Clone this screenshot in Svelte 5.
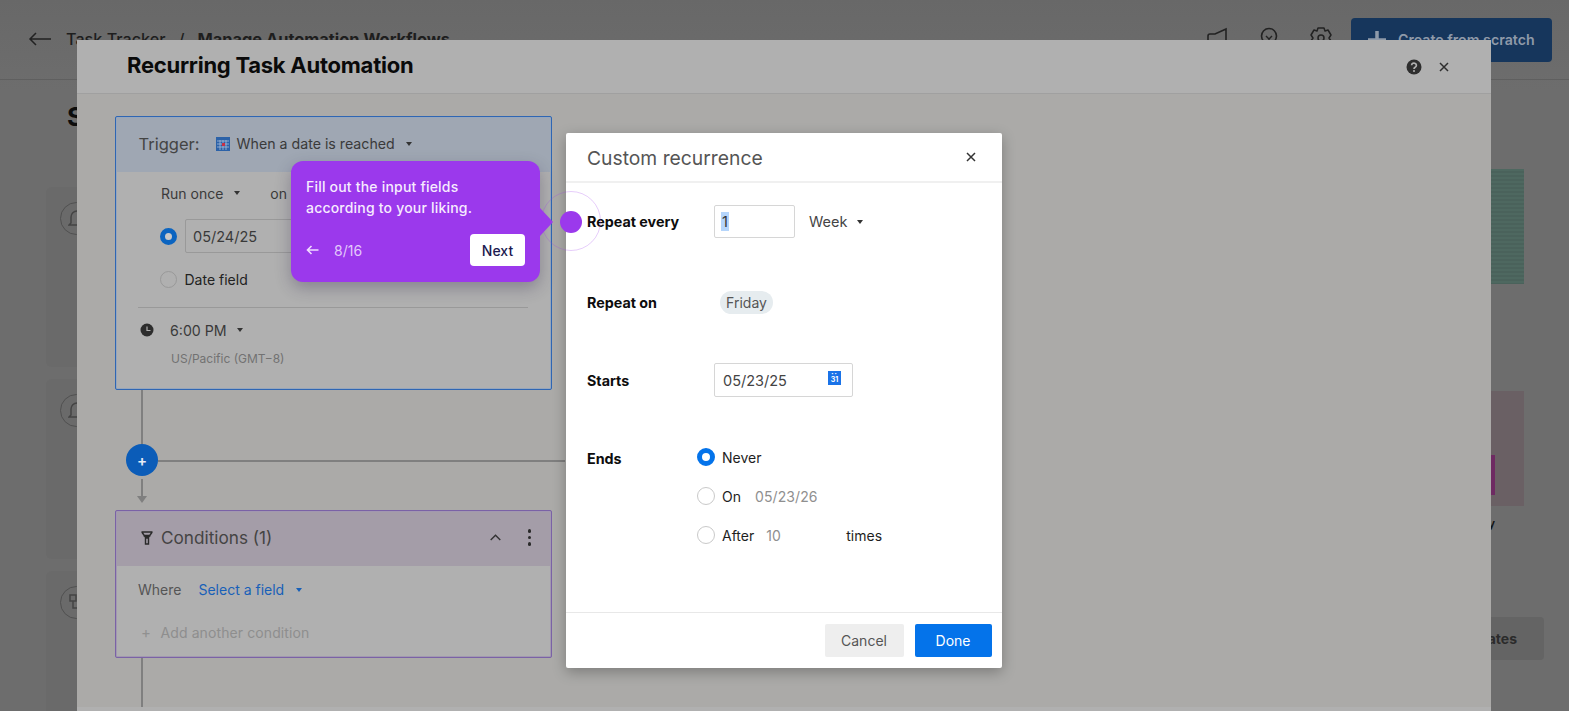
<script>
  const endOptions = [
    { label: 'Never', checked: true },
    { label: 'On', value: '05/23/26' },
    { label: 'After', value: '10', suffix: 'times' }
  ];
</script>

<div class="page">
  <header class="topbar">
    <svg class="back" width="24" height="14" viewBox="0 0 24 14"><path d="M23 7H2M8 1 2 7l6 6" fill="none" stroke="#222" stroke-width="1.5"/></svg>
    <span class="crumb">Task Tracker</span>
    <span class="crumb slash">/</span>
    <b class="crumb">Manage Automation Workflows</b>
    <span class="grow"></span>
    <svg class="topicon" width="24" height="24" viewBox="0 0 24 24"><path d="M3 20V9q0-2 2-2h5L21 2v18z" fill="none" stroke="#222" stroke-width="1.6"/></svg>
    <svg class="topicon" width="24" height="24" viewBox="0 0 24 24"><circle cx="12" cy="9" r="7.500" fill="none" stroke="#222" stroke-width="1.6"/><path d="m9 9 3 3 3-3M12 12v8" fill="none" stroke="#222" stroke-width="1.4"/></svg>
    <svg class="topicon gear" width="24" height="24" viewBox="0 0 24 24"><path d="m9 1h6l1 3 3-1 3 5-2 3 2 3-3 5-3-1-1 3H9l-1-3-3 1-3-5 2-3-2-3 3-5 3 1z" fill="none" stroke="#222" stroke-width="1.5" stroke-linejoin="round"/><circle cx="12" cy="11" r="3" fill="none" stroke="#222" stroke-width="1.5"/></svg>
    <button class="create">
      <svg width="18" height="18" viewBox="0 0 18 18"><path d="M9 0v18M0 9h18" stroke="#8f9aa9" stroke-width="3.500"/></svg>
      <span>Create from scratch</span>
    </button>
  </header>
  <main class="under">
    <div class="under-left">
      <h2>S</h2>
      <div class="ghost-card"><span class="ghost-circle"><svg width="18" height="20" viewBox="0 0 18 20"><path d="M3 14V8a6 6 0 0 1 12 0v6l2 2H1z" fill="none" stroke="#444" stroke-width="1.5"/></svg></span></div>
      <div class="ghost-card"><span class="ghost-circle"><svg width="18" height="20" viewBox="0 0 18 20"><path d="M3 14V8a6 6 0 0 1 12 0v6l2 2H1z" fill="none" stroke="#444" stroke-width="1.5"/></svg></span></div>
      <div class="ghost-card"><span class="ghost-circle"><svg width="18" height="20" viewBox="0 0 18 20"><path d="M2 2h6v6H2zM10 12h6v6h-6zM5 8v7h5" fill="none" stroke="#444" stroke-width="1.5"/></svg></span></div>
    </div>
    <div class="under-right">
      <div class="thumb green"></div>
      <div class="thumb pink"><span class="magenta"></span></div>
      <div class="thumb-label">Weekly</div>
      <button class="templates">Templates</button>
    </div>
  </main>
</div>

<section class="modal">
  <div class="modal-head">
    <h1>Recurring Task Automation</h1>
    <svg class="help" width="16" height="16" viewBox="0 0 16 16"><circle cx="8" cy="8" r="7.500" fill="#2e2e2e"/><path d="M5.600 6.200a2.400 2.200 0 1 1 3.600 2c-.8.500-1.200.8-1.200 1.700" fill="none" stroke="#b0b0b0" stroke-width="1.700"/><circle cx="8" cy="12" r="1" fill="#b0b0b0"/></svg>
    <svg class="modal-x" width="10" height="10" viewBox="0 0 10 10"><path d="m1 1 8 8M9 1 1 9" stroke="#2e2e2e" stroke-width="1.5"/></svg>
  </div>
  <div class="modal-body">
    <article class="card trigger">
      <div class="trigger-head">
        <span class="trigger-word">Trigger:</span>
        <svg class="tricon" width="14" height="14" viewBox="0 0 14 14"><rect width="14" height="14" fill="#2c62a8"/><path d="M1 4h12M1 7h12M1 10h12M4 3v10M7 3v10M10 3v10" stroke="#a9bcd8" stroke-width=".8"/><rect x="6" y="6" width="3" height="3" fill="#c83045"/></svg>
        <span class="trigger-val">When a date is reached</span>
        <i class="caret"></i>
      </div>
      <div class="trigger-body">
        <div class="run-row"><span>Run once</span><i class="caret"></i><span class="on">on</span></div>
        <div class="radio-row first">
          <span class="radio on-dark"></span>
          <span class="date-box">05/24/25</span>
        </div>
        <div class="radio-row">
          <span class="radio"></span>
          <span class="date-field">Date field</span>
        </div>
        <hr />
        <div class="time-row">
          <svg width="14" height="14" viewBox="0 0 14 14"><circle cx="7" cy="7" r="6.500" fill="#2d2d2d"/><path d="M7 3.500V7.500H10.500" fill="none" stroke="#b0b0b0" stroke-width="1.200"/></svg>
          <span>6:00 PM</span>
          <i class="caret"></i>
        </div>
        <div class="tz">US/Pacific (GMT−8)</div>
      </div>
    </article>

    <div class="connector">
      <span class="vline one"></span>
      <span class="add">+</span>
      <span class="hline"></span>
      <span class="vline two"></span>
      <span class="arrow"></span>
    </div>

    <article class="card conditions">
      <div class="cond-head">
        <svg width="12" height="14" viewBox="0 0 12 14"><path d="M.5 1h11M2 4.500h8M4.500 6h3v7h-3z M.8 1 5 7h2l4.200-6" fill="none" stroke="#2a2a2a" stroke-width="1.400"/></svg>
        <span class="cond-title">Conditions (1)</span>
        <span class="grow"></span>
        <svg width="11" height="7" viewBox="0 0 11 7"><path d="m.7 6 4.800-4.800L10.300 6" fill="none" stroke="#333" stroke-width="1.400"/></svg>
        <span class="dots"><i></i><i></i><i></i></span>
      </div>
      <div class="cond-body">
        <div class="where"><span>Where</span><span class="field">Select a field</span><i class="caret blue"></i></div>
        <div class="another"><span class="aplus">+</span>Add another condition</div>
      </div>
    </article>
    <span class="vline three"></span>
  </div>
  <div class="modal-foot"></div>
</section>

<section class="dialog">
  <div class="dlg-head">
    <span class="dlg-title">Custom recurrence</span>
    <svg width="10" height="10" viewBox="0 0 10 10"><path d="m1 1 8 8M9 1 1 9" stroke="#333" stroke-width="1.5"/></svg>
  </div>
  <div class="dlg-body">
    <div class="row every">
      <span class="lbl">Repeat every</span>
      <span class="num"><span class="sel">1</span></span>
      <span class="week">Week</span>
      <i class="caret"></i>
    </div>
    <div class="row on-day">
      <span class="lbl">Repeat on</span>
      <span class="chip">Friday</span>
    </div>
    <div class="row starts">
      <span class="lbl">Starts</span>
      <span class="start-box">
        <span>05/23/25</span>
        <span class="cal"><span class="cal-dots">▪▪</span><span class="cal-num">31</span></span>
      </span>
    </div>
    <div class="row ends">
      <span class="lbl">Ends</span>
      <div class="opts">
        {#each endOptions as o}
          <div class="opt">
            <span class="radio" class:blue-on={o.checked}></span>
            <span class="opt-label">{o.label}</span>
            {#if o.value}<span class="opt-val" class:short={o.suffix}>{o.value}</span>{/if}
            {#if o.suffix}<span class="opt-label">{o.suffix}</span>{/if}
          </div>
        {/each}
      </div>
    </div>
  </div>
  <div class="dlg-foot">
    <button class="cancel">Cancel</button>
    <button class="done">Done</button>
  </div>
</section>

<aside class="tip">
  <p>Fill out the input fields<br />according to your liking.</p>
  <div class="tip-foot">
    <svg width="13" height="10" viewBox="0 0 13 10"><path d="M12.500 5H1.500M5.500 1 1.500 5l4 4" fill="none" stroke="#f0dcff" stroke-width="1.600"/></svg>
    <span class="count">8/16</span>
    <span class="grow"></span>
    <button class="next">Next</button>
  </div>
  <span class="beak"></span>
</aside>
<span class="ring"></span>
<span class="dot"></span>

<style>
  :global(body) {
    margin: 0;
    background: #6c6c6c;
    font-family: Inter, "Liberation Sans", sans-serif;
    overflow: hidden;
  }
  .grow { flex: 1; }
  button { font-family: inherit; border: 0; }
  i { display: block; }

  .page { height: 711px; overflow: hidden; background: linear-gradient(#686868, #6d6d6d 90px); }
  .topbar {
    height: 80px;
    box-sizing: border-box;
    border-bottom: 1px solid #5f5f5f;
    display: flex;
    align-items: center;
    padding: 0 17px 0 28px;
  }
  .back { margin: 0 14px 2px 0; }
  .crumb { font-size: 16.2px; color: #1e1e1e; font-weight: 500; margin-bottom: 2px; }
  .slash { margin: 0 13px 2px; }
  b.crumb { font-weight: 700; font-size: 16.4px; }
  .topicon { margin-right: 28px; position: relative; top: -1px; }
  .topicon.gear { margin-right: 18px; }
  .create {
    width: 201px; height: 44px; background: #16365c; border-radius: 4px; white-space: nowrap;
    color: #8f9aa9; font-size: 14.2px; font-weight: 600;
    display: flex; align-items: center; gap: 12px; padding: 0 0 0 17px; box-sizing: border-box;
  }

  .under { display: flex; justify-content: space-between; padding: 0 25px 0 46px; }
  .under-left { width: 300px; }
  .under-left h2 { margin: 22px 0 0 21px; font-size: 26px; line-height: 30px; color: #0d0d0d; height: 85px; }
  .ghost-card { height: 180px; margin-bottom: 12px; background: #6a6a6a; padding: 15px 14px; box-sizing: border-box; border-radius: 6px; }
  .ghost-circle { width: 33px; height: 33px; box-sizing: border-box; border: 1.5px solid #505050; border-radius: 50%; display: flex; align-items: center; justify-content: center; }
  .under-right { display: flex; flex-direction: column; align-items: flex-end; padding-right: 20px; }
  .thumb { width: 120px; height: 115px; position: relative; }
  .green { margin-top: 89px; background: repeating-linear-gradient(#4e6860 0 2px, #4a625b 2px 4px); }
  .pink { margin-top: 107px; background: #6a6064; }
  .magenta { position: absolute; left: 0; width: 91px; top: 64px; height: 40px; background: #6e2a62; }
  .thumb-label { margin-top: 10px; font-size: 12px; font-weight: 600; color: #111; margin-right: 29px; }
  .templates {
    margin: 86px -20px 0 0; width: 120px; height: 43px; background: #646464; border-radius: 4px;
    font-size: 14px; font-weight: 700; color: #2b2b2b; text-align: right; padding-right: 27px;
  }

  .modal {
    position: absolute; left: 77px; top: 40px; width: 1414px; height: 671px;
    display: flex; flex-direction: column; background: #b0b0b0;
  }
  .modal-head {
    height: 54px; flex: none; box-sizing: border-box; border-bottom: 1px solid #a0a0a0; display: flex; align-items: center;
    padding: 0 42px 0 50px;
  }
  h1 { margin: 0 0 3px; flex: 1; font-size: 22px; font-weight: 700; letter-spacing: -.25px; color: #0a0a0a; }
  .modal-x { margin: 0 0 0 17px; }
  .modal-body { flex: 1; background: #abaaa8; padding: 22px 0 0 38px; display: flex; flex-direction: column; min-height: 0; }
  .modal-foot { height: 4px; flex: none; background: #b0b0b0; }

  .card { width: 437px; box-sizing: border-box; border-radius: 2px; overflow: hidden; background: #b0b0b0; flex: none; }
  .trigger { border: 2px solid #96a6bc; outline: 1px solid #2f66b3; outline-offset: -1px; height: 274px; }
  .trigger-head { height: 54px; box-sizing: border-box; padding: 0 0 2px 21.500px; background: #9fa7b3; display: flex; align-items: center; }
  .trigger-word { font-size: 16.5px; color: #444; margin-right: 16px; }
  .tricon { margin-right: 7px; }
  .trigger-val { font-size: 14.2px; color: #3a3a3a; margin: 0 11px 2px 0; }
  .caret { width: 0; height: 0; border: 3.5px solid transparent; border-top: 4px solid #333; border-bottom: 0; }
  .caret.blue { border-top-color: #1860b8; }
  .trigger-body { padding: 0 22px 0 21px; color: #3a3a3a; font-size: 14px; }
  .run-row { display: flex; align-items: center; height: 42px; padding-left: 23px; }
  .run-row .caret { margin-left: 11px; }
  .on { margin-left: 30px; }
  .radio-row { display: flex; align-items: center; gap: 8px; padding-left: 21.500px; height: 33px; }
  .radio-row.first { height: 34px; margin: 5px 0 10px; }
  .radio { width: 17px; height: 17px; box-sizing: border-box; border-radius: 50%; border: 1px solid #999; flex: none; }
  .on-dark { border: 5.500px solid #0b64c0; background: #c8c8c8; }
  .date-box { width: 150px; height: 34px; border: 1px solid #999; box-sizing: border-box; display: flex; align-items: center; padding-left: 7.500px; font-size: 14.5px; border-radius: 2px; }
  .date-field { color: #222; font-size: 14px; }
  hr { border: 0; border-top: 1px solid #999; margin: 11px 0 0; }
  .time-row { display: flex; align-items: center; gap: 16px; height: 44px; padding-left: 2px; font-size: 14.2px; }
  .time-row .caret { margin-left: -6px; }
  .tz { font-size: 12px; color: #727272; padding-left: 33px; margin-top: -1px; line-height: 16px; }

  .connector { position: relative; height: 120px; flex: none; }
  .vline { position: absolute; width: 2px; background: #7f7f7f; }
  .one { left: 26px; top: 0; height: 54px; }
  .add {
    position: absolute; left: 11px; top: 54px; width: 32px; height: 32px; border-radius: 50%;
    background: #0b5cb8; color: #e8eef6; display: flex; align-items: center; justify-content: center;
    font-size: 15px; font-weight: 600; line-height: 1;
  }
  .hline { position: absolute; left: 43px; top: 70px; width: 407px; height: 2px; background: #7f7f7f; }
  .two { left: 26px; top: 89px; height: 21px; }
  .arrow { position: absolute; left: 22px; top: 106px; border: 5px solid transparent; border-top: 7px solid #7f7f7f; border-bottom: 0; }

  .conditions { border: 2px solid #a298b0; outline: 1px solid #7a62a6; outline-offset: -1px; height: 148px; }
  .cond-head { height: 54px; box-sizing: border-box; padding: 0 19px 3px 24px; background: #a49da8; display: flex; align-items: center; color: #444; }
  .cond-title { font-size: 17.2px; margin-left: 8px; }
  .dots { display: flex; flex-direction: column; gap: 3px; margin-left: 27px; }
  .dots i { width: 3.5px; height: 3.5px; border-radius: 50%; background: #2a2a2a; }
  .cond-body { padding: 0 22px 0 21px; font-size: 14px; }
  .where { display: flex; align-items: center; height: 47px; color: #555; }
  .field { color: #1860b8; margin: 0 12px 0 17px; }
  .another { color: #8e8e8e; display: flex; align-items: center; height: 38px; padding-left: 3px; letter-spacing: .1px; }
  .aplus { font-size: 15px; width: 19.500px; color: #909090; }
  .three { position: relative; display: block; margin-left: 26px; height: 49px; flex: none; }

  .dialog {
    position: absolute; left: 566px; top: 133px; width: 436px; height: 535px;
    background: #fff; border-radius: 2px; box-shadow: 0 4px 14px rgba(0, 0, 0, .28);
    display: flex; flex-direction: column;
  }
  .dlg-head {
    height: 50px; flex: none; box-sizing: border-box; border-bottom: 2px solid #f0f0f0; display: flex;
    align-items: center; justify-content: space-between; padding: 0 26px 0 21px;
  }
  .dlg-title { font-size: 19.3px; color: #555; margin-top: 2px; }
  .dlg-body { flex: 1; padding: 22px 0 0 21px; position: relative; }
  .row { display: flex; align-items: center; font-size: 14px; color: #333; }
  .lbl { width: 127px; flex: none; font-weight: 700; color: #0d0d0d; font-size: 14.3px; }
  .every { height: 33px; }
  .num { width: 81px; height: 33px; box-sizing: border-box; border: 1px solid #d6d6d6; border-radius: 2px; display: flex; align-items: center; padding-left: 6px; font-size: 14.5px; }
  .sel { background: #b5d5fb; height: 19px; padding: 0 1px; line-height: 19px; }
  .week { margin: 0 10px 0 14px; font-size: 14.5px; color: #444; }
  .on-day { margin-top: 53px; height: 23px; }
  .chip { margin-left: 6px; height: 23px; width: 53px; border-radius: 12px; background: #e6ecef; display: flex; align-items: center; justify-content: center; color: #555; font-size: 14px; }
  .starts { margin-top: 49px; height: 34px; }
  .start-box { width: 139px; height: 34px; box-sizing: border-box; border: 1px solid #d6d6d6; border-radius: 2px; display: flex; align-items: center; justify-content: space-between; padding: 0 11px 0 8px; font-size: 14.5px; color: #444; }
  .cal { width: 13px; height: 14px; background: #1a73e8; margin-top: -4px; position: relative; display: flex; flex-direction: column; align-items: center; color: #fff; overflow: hidden; }
  .cal-dots { font-size: 4px; line-height: 5px; letter-spacing: 1px; }
  .cal-num { font-size: 7px; line-height: 8px; font-weight: 700; letter-spacing: 0; }
  .ends { margin-top: 50px; align-items: flex-start; }
  .ends .lbl { margin-top: 3px; }
  .opts { margin-left: -17px; display: flex; flex-direction: column; gap: 19px; }
  .opt { display: flex; align-items: center; height: 20px; color: #1e1e1e; }
  .opt .radio { width: 18px; height: 18px; border-color: #c9c9c9; margin-right: 7px; }
  .radio.blue-on { border: 5px solid #0473ea !important; background: #fff; }
  .opt-label { font-size: 14px; }
  .opt-val { margin-left: 14px; color: #8f8f8f; font-size: 14px; letter-spacing: .1px; }
  .opt-val.short { margin-left: 12px; width: 80px; }
  .dlg-foot {
    height: 56px; flex: none; box-sizing: border-box; border-top: 1.5px solid #e8e8e8; display: flex;
    justify-content: flex-end; gap: 11px; padding: 11px 10.500px 0 0;
  }
  .cancel, .done { height: 33px; border-radius: 2px; font-size: 14px; }
  .cancel { width: 79px; background: #eee; color: #555; }
  .done { width: 77px; background: #0473ea; color: #fff; }

  .tip {
    position: absolute; left: 291px; top: 161px; width: 249px; height: 121px; box-sizing: border-box;
    background: #9b39ec; border-radius: 12px; padding: 15px 15px 16px;
    box-shadow: 0 6px 16px rgba(40, 30, 70, .3); color: #fff;
    display: flex; flex-direction: column; justify-content: space-between;
  }
  .tip p { margin: 0; font-size: 14px; line-height: 21px; font-weight: 500; color: #f6ecfe; letter-spacing: .2px; }
  .tip-foot { display: flex; align-items: center; }
  .count { margin-left: 15px; font-size: 14px; color: #e3c8fb; }
  .next { width: 55px; height: 32px; border-radius: 4px; background: #fff; color: #1c1a4f; font-size: 14px; font-weight: 500; }
  .beak { position: absolute; left: 249px; top: 47px; width: 0; height: 0; border: 14px solid transparent; border-left: 13px solid #9b39ec; border-right: 0; }
  .ring { position: absolute; left: 540.500px; top: 191px; width: 60px; height: 60px; box-sizing: border-box; border: 1px solid rgba(155, 57, 236, .25); border-radius: 50%; }
  .dot { position: absolute; left: 559.500px; top: 211px; width: 22px; height: 22px; border-radius: 50%; background: #9b39ec; }
</style>
